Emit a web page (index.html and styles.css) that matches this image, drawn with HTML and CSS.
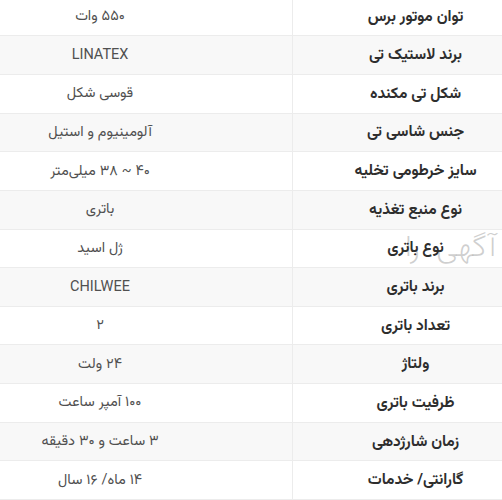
FILE: index.html
```html
<!DOCTYPE html>
<html lang="fa" dir="rtl">
<head>
<meta charset="utf-8">
<link rel="stylesheet" href="styles.css">
</head>
<body>
<div class="specs">
  <div class="row"><div class="k">توان موتور برس</div><div class="v">۵۵۰ وات</div></div>
  <div class="row"><div class="k">برند لاستیک تی</div><div class="v">LINATEX</div></div>
  <div class="row"><div class="k">شکل تی مکنده</div><div class="v">قوسی شکل</div></div>
  <div class="row"><div class="k">جنس شاسی تی</div><div class="v">آلومینیوم و استیل</div></div>
  <div class="row"><div class="k">سایز خرطومی تخلیه</div><div class="v">۴۰ ~ ۳۸ میلی‌متر</div></div>
  <div class="row"><div class="k">نوع منبع تغذیه</div><div class="v">باتری</div></div>
  <div class="row"><span class="mark">آگهی&nbsp;&nbsp;را</span><div class="k">نوع باتری</div><div class="v">ژل اسید</div></div>
  <div class="row"><div class="k">برند باتری</div><div class="v">CHILWEE</div></div>
  <div class="row"><div class="k">تعداد باتری</div><div class="v">۲</div></div>
  <div class="row"><div class="k">ولتاژ</div><div class="v">۲۴ ولت</div></div>
  <div class="row"><div class="k">ظرفیت باتری</div><div class="v">۱۰۰ آمپر ساعت</div></div>
  <div class="row"><div class="k">زمان شارژدهی</div><div class="v">۳ ساعت و ۳۰ دقیقه</div></div>
  <div class="row"><div class="k">گارانتی/ خدمات</div><div class="v">۱۴ ماه/ ۱۶ سال</div></div>
</div>
</body>
</html>
```
FILE: styles.css
```css
html, body {
  margin: 0;
  padding: 0;
  background: #fff;
  overflow: hidden;
}
body {
  width: 502px;
  height: 500px;
  font-family: "Vazirmatn", "Noto Sans Arabic", "DejaVu Sans", sans-serif;
}
.specs {
  margin-top: -2.3px;
  display: flex;
  flex-direction: column;
}
.row {
  position: relative;
  display: grid;
  grid-template-columns: 210px 292px;
  height: 38.65px;
  box-sizing: border-box;
  border-bottom: 1px solid #ececec;
  align-items: center;
}
.row:nth-child(even) {
  background: #f8f8f8;
}
.k {
  position: relative;
  height: 100%;
  display: flex;
  align-items: center;
  justify-content: center;
  padding-left: 36px;
  border-left: 1px solid #ececec;
  font-weight: bold;
  font-size: 15.5px;
  color: #2e2e2e;
}
.v {
  height: 100%;
  display: flex;
  align-items: center;
  justify-content: center;
  padding-right: 92px;
  font-size: 14.5px;
  color: #505050;
}
.mark {
  position: absolute;
  right: 6px;
  top: 3px;
  font-size: 31px;
  line-height: 1;
  font-weight: 200;
  color: rgba(160, 160, 160, 0.5);
  pointer-events: none;
}
```
